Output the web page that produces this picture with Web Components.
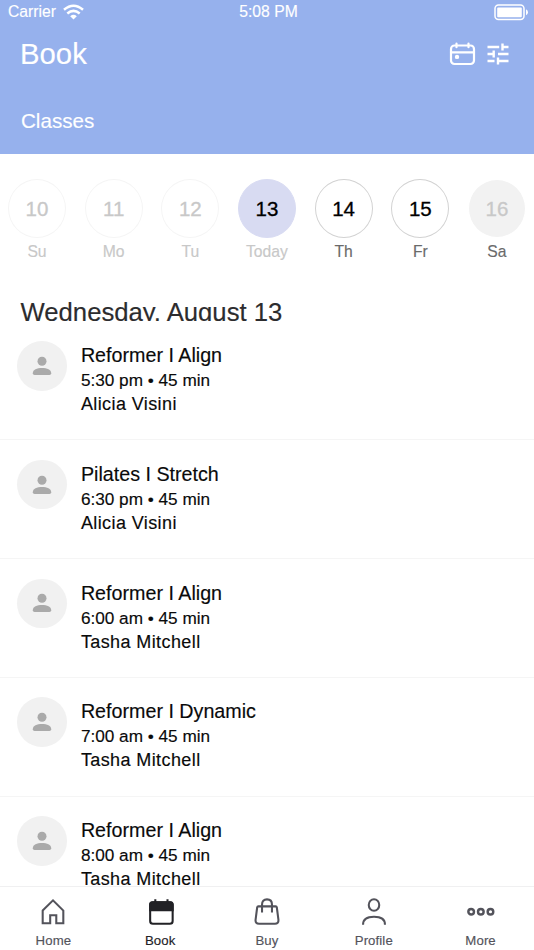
<!DOCTYPE html>
<html lang="en">
  <head>
    <meta charset="UTF-8" />
    <meta name="viewport" content="width=device-width, initial-scale=1.0" />
    <title>Book</title>
    <style>
      body {
        margin: 0;
        background: #fff;
        font-family: "Liberation Sans", Arial, sans-serif;
        -webkit-text-stroke: 0.15px currentColor;
      }
    </style>
  </head>
  <body>
    <template id="booking-app-template">
      <style>
        :host {
          display: flex;
          flex-direction: column;
          width: 534px;
          height: 950px;
          overflow: hidden;
          background: #fff;
        }
        .week {
          display: flex;
          justify-content: space-between;
          padding: 25px 8px 0;
          height: 108px;
          flex: none;
        }
        h2 {
          flex: none;
          box-sizing: border-box;
          height: 34px;
          margin: 0;
          padding-left: 20.5px;
          overflow: hidden;
          font-size: 25.7px;
          font-weight: 400;
          line-height: 50px;
          color: #2c2c2e;
        }
        .list {
          flex: 1;
          min-height: 0;
          padding-top: 0.5px;
          overflow: hidden;
        }
        .tabs {
          display: flex;
          flex: none;
          height: 63px;
          border-top: 1px solid #f0f0f1;
        }
      </style>
      <app-header heading="Book" section="Classes"></app-header>
      <div class="week"><slot name="day"></slot></div>
      <h2><slot name="date"></slot></h2>
      <div class="list"><slot></slot></div>
      <div class="tabs"><slot name="tab"></slot></div>
    </template>

    <template id="app-header-template">
      <style>
        :host {
          display: block;
          flex: none;
          box-sizing: border-box;
          height: 154px;
          background: #96b1ed;
          color: #fff;
        }
        .status {
          display: grid;
          grid-template-columns: 1fr auto 1fr;
          align-items: center;
          height: 24px;
          padding: 0 5px 0 8px;
          font-size: 15.7px;
        }
        .status div {
          display: flex;
          align-items: center;
          gap: 7px;
        }
        .status div:last-child {
          justify-content: flex-end;
        }
        .title {
          display: flex;
          align-items: center;
          height: 60px;
          padding: 0 25px 0 20px;
          gap: 11px;
        }
        h1 {
          flex: 1;
          margin: 0;
          font-size: 29.3px;
          font-weight: 400;
        }
        .section {
          padding-left: 21px;
          font-size: 20.6px;
          line-height: 74px;
        }
        svg {
          display: block;
          fill: none;
          stroke: #fff;
        }
      </style>
      <div class="status">
        <div>
          <span>Carrier</span>
          <svg width="21" height="16" viewBox="0 0 21 16" stroke-width="2.5">
            <path d="M1 5.800Q10.500 -2.400 20 5.800M4.300 9.500Q10.500 4.300 16.700 9.500" />
            <path d="M7.200 12.200Q10.500 9.400 13.800 12.200L10.500 15.600Z" fill="#fff" stroke="none" />
          </svg>
        </div>
        <span>5:08 PM</span>
        <div>
          <svg width="35" height="17" viewBox="0 0 35 17">
            <rect x="1" y="1" width="29" height="14.500" rx="3.500" stroke-width="1.500" />
            <rect x="3.200" y="3.400" width="24.600" height="9.800" rx="1" fill="#fff" stroke="none" />
            <path d="M32 5.200Q34 6.200 34 8.200T32 11.200Z" fill="#fff" stroke="none" />
          </svg>
        </div>
      </div>
      <div class="title">
        <h1></h1>
        <svg width="27" height="26" viewBox="0 0 27 26" stroke-width="2.200" stroke-linecap="round">
          <rect x="2" y="4.500" width="23" height="18.500" rx="3.500" />
          <path d="M2 11.300H25M7.500 2.600V6.200M19.500 2.600V6.200" />
          <circle cx="8" cy="15.900" r="2.200" fill="#fff" stroke="none" />
        </svg>
        <svg width="22" height="22" viewBox="0 0 22 22" stroke-width="2.400">
          <path d="M.5 4H12.200M15.500 4H21.500M15.500 .5V7.500M.5 11H7M6.700 7.500V14.500M11 11H21.500M.5 18H7.500M11 14.500V21.500M11 18H21.500" />
        </svg>
      </div>
      <div class="section"></div>
    </template>

    <template id="day-chip-template">
      <style>
        :host {
          display: flex;
          flex-direction: column;
          align-items: center;
          width: 58px;
          color: #c8c8c8;
        }
        .number {
          display: flex;
          align-items: center;
          justify-content: center;
          box-sizing: border-box;
          width: 58px;
          height: 59px;
          border: 1px solid #f5f5f5;
          border-radius: 50%;
          font-size: 20.5px;
          -webkit-text-stroke: 0.3px currentColor;
        }
        .label {
          margin-top: 3.5px;
          font-size: 15.7px;
          line-height: 20px;
          white-space: nowrap;
        }
        :host([state="selected"]) .number {
          background: #d8dbf2;
          border-color: #d8dbf2;
          color: #000;
        }
        :host([state="open"]) .number {
          border-color: #d2d2d2;
          color: #000;
        }
        :host([state="closed"]) .number {
          background: #f2f2f2;
          border-color: #fff;
        }
        :host([state="open"]) .label,
        :host([state="closed"]) .label {
          color: #6a6a6a;
        }
      </style>
      <div class="number"><slot></slot></div>
      <div class="label"></div>
    </template>

    <template id="class-row-template">
      <style>
        :host {
          display: flex;
          box-sizing: border-box;
          height: 118.8px;
          padding: 19.5px 17.4px 0;
          gap: 14px;
          border-bottom: 1.5px solid #f5f5f5;
          color: #0a0a0a;
        }
        .avatar {
          display: flex;
          align-items: center;
          justify-content: center;
          flex: none;
          width: 49.5px;
          height: 49.5px;
          border-radius: 50%;
          background: #f1f1f1;
        }
        .name,
        .time,
        .teacher {
          white-space: nowrap;
        }
        .name {
          margin-top: 1px;
          font-size: 19.7px;
          line-height: 27px;
        }
        .time {
          font-size: 17.2px;
          line-height: 23px;
        }
        .teacher {
          font-size: 18px;
          line-height: 25px;
          letter-spacing: 0.4px;
        }
      </style>
      <div class="avatar">
        <svg width="20" height="20" viewBox="0 0 20 20" fill="#aaa">
          <circle cx="10" cy="5.300" r="4.500" />
          <path d="M.8 17.300C.8 13.400 5 12 10 12S19.200 13.400 19.200 17.300Q19.200 19 17.500 19H2.500Q.8 19 .8 17.300Z" />
        </svg>
      </div>
      <div>
        <div class="name"><slot></slot></div>
        <div class="time"><slot name="time"></slot></div>
        <div class="teacher"><slot name="teacher"></slot></div>
      </div>
    </template>

    <template id="tab-item-template">
      <style>
        :host {
          display: flex;
          flex: 1;
          flex-direction: column;
          align-items: center;
          padding-top: 9.5px;
          color: #53535b;
        }
        :host([active]) {
          color: #222226;
        }
        svg {
          display: block;
          fill: none;
          stroke: currentColor;
          stroke-width: 2.2;
        }
        .label {
          margin-top: 5.5px;
          font-size: 13.2px;
          line-height: 18px;
          letter-spacing: 0.1px;
        }
      </style>
      <svg width="32" height="32" viewBox="0 0 32 32"></svg>
      <div class="label"><slot></slot></div>
    </template>

    <booking-app>
      <day-chip slot="day" label="Su">10</day-chip>
      <day-chip slot="day" label="Mo">11</day-chip>
      <day-chip slot="day" label="Tu">12</day-chip>
      <day-chip slot="day" label="Today" state="selected">13</day-chip>
      <day-chip slot="day" label="Th" state="open">14</day-chip>
      <day-chip slot="day" label="Fr" state="open">15</day-chip>
      <day-chip slot="day" label="Sa" state="closed">16</day-chip>

      <span slot="date">Wednesday, August 13</span>

      <class-row>
        Reformer I Align
        <span slot="time">5:30 pm • 45 min</span>
        <span slot="teacher">Alicia Visini</span>
      </class-row>
      <class-row>
        Pilates I Stretch
        <span slot="time">6:30 pm • 45 min</span>
        <span slot="teacher">Alicia Visini</span>
      </class-row>
      <class-row>
        Reformer I Align
        <span slot="time">6:00 am • 45 min</span>
        <span slot="teacher">Tasha Mitchell</span>
      </class-row>
      <class-row>
        Reformer I Dynamic
        <span slot="time">7:00 am • 45 min</span>
        <span slot="teacher">Tasha Mitchell</span>
      </class-row>
      <class-row>
        Reformer I Align
        <span slot="time">8:00 am • 45 min</span>
        <span slot="teacher">Tasha Mitchell</span>
      </class-row>

      <tab-item slot="tab" icon="home">Home</tab-item>
      <tab-item slot="tab" icon="book" active>Book</tab-item>
      <tab-item slot="tab" icon="buy">Buy</tab-item>
      <tab-item slot="tab" icon="profile">Profile</tab-item>
      <tab-item slot="tab" icon="more">More</tab-item>
    </booking-app>

    <script>
      const icons = {
        home: '<path d="M5 14.500L16 3.600L27 14.500V28H19.500V19.500H13V28H5Z"/>',
        book: '<rect x="5.500" y="5.500" width="24" height="23" rx="3"/><path d="M5.500 14V8Q5.500 5.500 8 5.500H27Q29.500 5.500 29.500 8V14Z" fill="currentColor"/><path d="M11 2.300V7M24 2.300V7"/>',
        buy: '<path d="M6.800 10H25.200Q26.300 10 26.500 11.200L28.200 24.500Q28.500 28.500 24.500 28.500H7.500Q3.500 28.500 3.800 24.500L5.500 11.200Q5.700 10 6.800 10Z"/><path d="M10.700 16.500V8Q10.700 2.500 16 2.500T21.300 8V16.500"/>',
        profile: '<ellipse cx="16" cy="8.500" rx="5.600" ry="6.200"/><path d="M4.300 29.500C4.300 23.500 8 21 16 21S27.700 23.500 27.700 29.500"/>',
        more: '<g stroke-width="2.600"><circle cx="5.500" cy="15.700" r="3"/><circle cx="15.800" cy="15.700" r="3"/><circle cx="26.100" cy="15.700" r="3"/></g>',
      };

      class TemplateElement extends HTMLElement {
        constructor() {
          super();
          this.attachShadow({ mode: "open" });
          const template = document.querySelector(`#${this.localName}-template`);
          this.shadowRoot.appendChild(template.content.cloneNode(true));
        }
      }

      class BookingApp extends TemplateElement {}

      class AppHeader extends TemplateElement {
        connectedCallback() {
          this.shadowRoot.querySelector("h1").textContent = this.getAttribute("heading");
          this.shadowRoot.querySelector(".section").textContent = this.getAttribute("section");
        }
      }

      class DayChip extends TemplateElement {
        connectedCallback() {
          this.shadowRoot.querySelector(".label").textContent = this.getAttribute("label");
        }
      }

      class ClassRow extends TemplateElement {}

      class TabItem extends TemplateElement {
        connectedCallback() {
          this.shadowRoot.querySelector("svg").innerHTML = icons[this.getAttribute("icon")];
        }
      }

      customElements.define("app-header", AppHeader);
      customElements.define("day-chip", DayChip);
      customElements.define("class-row", ClassRow);
      customElements.define("tab-item", TabItem);
      customElements.define("booking-app", BookingApp);
    </script>
  </body>
</html>
